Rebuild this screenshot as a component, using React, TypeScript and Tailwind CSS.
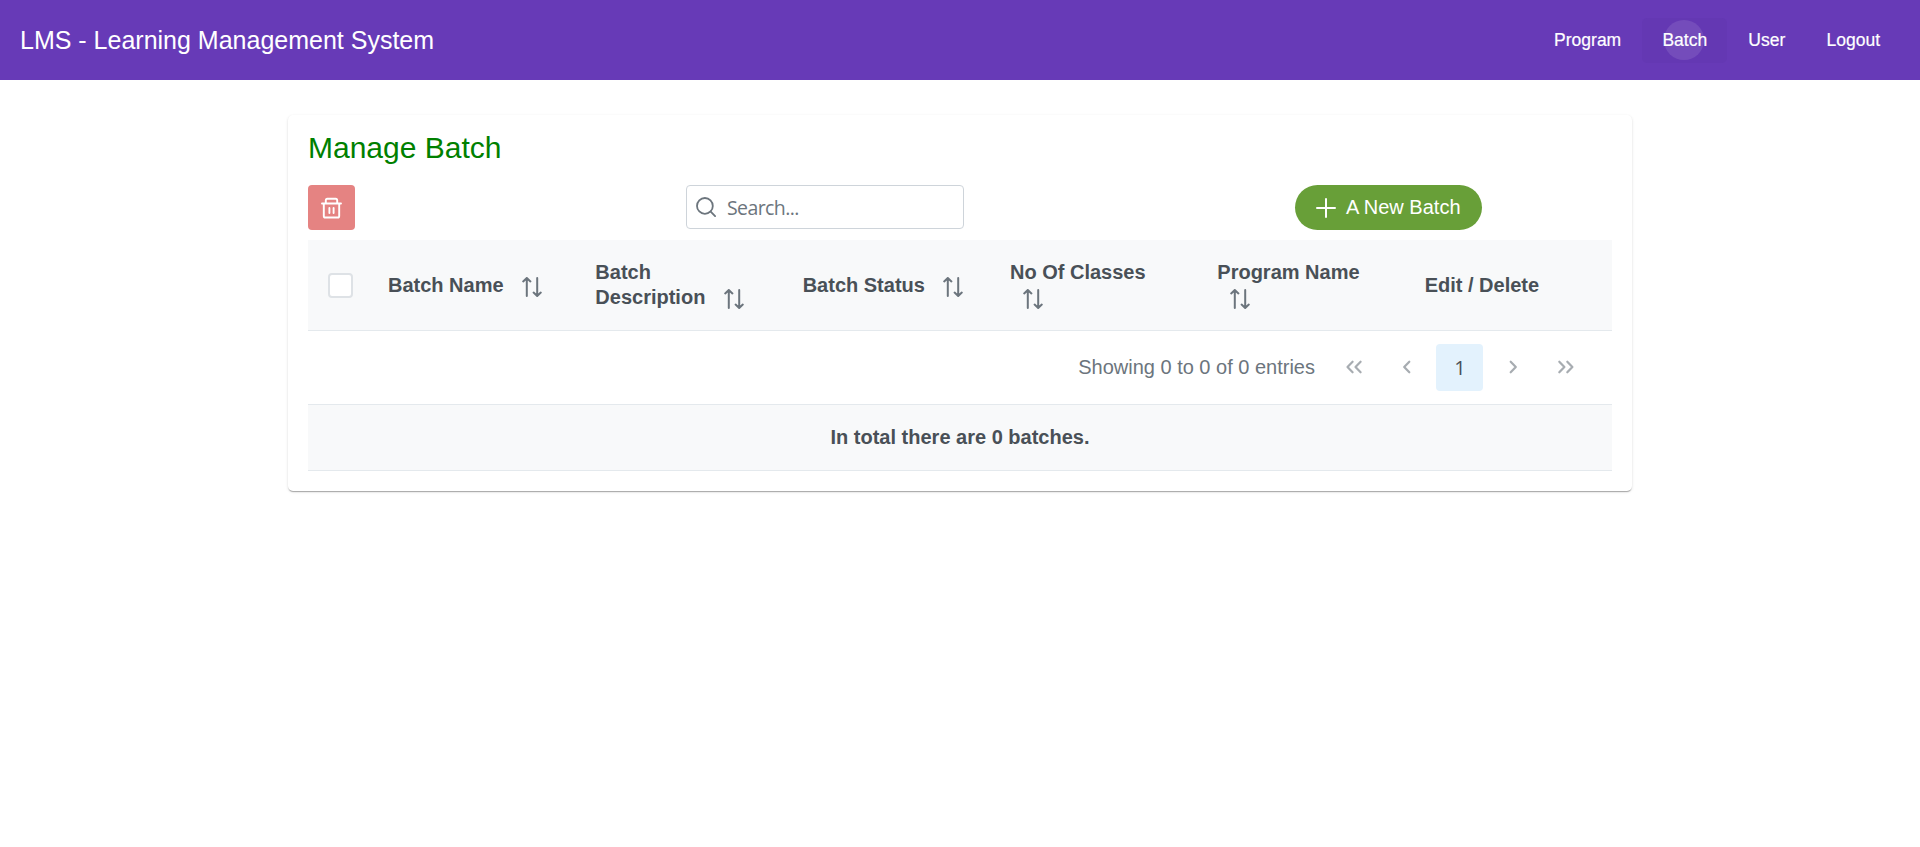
import React from "react";

const nav = ["Program", "Batch", "User", "Logout"];

const columns = [
  { label: "Batch Name", sortable: true, lines: 1 },
  { label: "Batch Description", sortable: true, lines: 2 },
  { label: "Batch Status", sortable: true, lines: 1 },
  { label: "No Of Classes", sortable: true, lines: 2 },
  { label: "Program Name", sortable: true, lines: 2 },
  { label: "Edit / Delete", sortable: false, lines: 1 },
];

function SortIcon() {
  return (
    <svg className="ml-[13px] inline-block h-5 w-5 align-[-5px] text-[#6c757d]" viewBox="0 0 20 20" fill="none" stroke="currentColor" strokeWidth="2" strokeLinecap="round" strokeLinejoin="round">
      <path d="M4.8 19V1.4M1.2 4.4l3.6-3.4 3.6 3.4M15.2 1V18.6M11.6 15.6l3.6 3.4 3.6-3.4" />
    </svg>
  );
}

function TrashIcon() {
  return (
    <svg className="h-[22px] w-[21px]" viewBox="0 0 21 22" fill="none" stroke="currentColor" strokeWidth="1.9" strokeLinecap="round" strokeLinejoin="round">
      <path d="M1 6.5h19M2.8 6.5v12.4c0 .9.6 1.6 1.5 1.6h12.4c.9 0 1.5-.7 1.5-1.6V6.5M4.8 6.5V3.4c0-.9.6-1.6 1.5-1.6h8.4c.9 0 1.5.7 1.5 1.6v3.1M8.4 11v5M12.6 11v5" />
    </svg>
  );
}

function Chevron({ paths, label }: { paths: string; label: string }) {
  return (
    <button aria-label={label} className="mx-[3px] flex h-[47px] w-[47px] items-center justify-center text-[#6c757d]/60">
      <svg className="h-[18px] w-[18px]" viewBox="0 0 18 18" fill="none" stroke="currentColor" strokeWidth="2.2" strokeLinecap="round" strokeLinejoin="round">
        <path d={paths} />
      </svg>
    </button>
  );
}

export default function App() {
  return (
    <div className="min-h-[847px] bg-white font-['Liberation_Sans',Arial,sans-serif]">
      <header className="flex h-20 items-center justify-between bg-[#673ab7] px-5 text-white">
        <h1 className="text-[25px] leading-8">LMS - Learning Management System</h1>
        <nav className="flex gap-[1.2px]">
          {nav.map((item) => (
            <button key={item} className={"relative h-[45px] rounded-[5px] px-5 text-[17.5px] [-webkit-text-stroke:0.2px_white] " + (item === "Batch" ? "bg-[#6438b3]" : "")}>
              {item === "Batch" && <span className="absolute top-[2px] left-[21.5px] h-10 w-10 rounded-full bg-white/10" />}
              <span className="relative">{item}</span>
            </button>
          ))}
        </nav>
      </header>

      <main className="mx-auto mt-[35px] h-[376px] w-[1344px] rounded-[5px] bg-white px-5 shadow-[0_2px_1px_-1px_rgba(0,0,0,0.2),0_1px_1px_0_rgba(0,0,0,0.1),0_1px_3px_0_rgba(0,0,0,0.12)]">
        <h2 className="pt-[13px] text-[30px] leading-10 text-[#008000]">Manage Batch</h2>

        <div className="mt-[17px] flex h-[45px] items-start">
          <button aria-label="Delete" className="flex h-[45px] w-[47px] items-center justify-center rounded-[4px] bg-[#e58382] text-white">
            <TrashIcon />
          </button>
          <label className="ml-[331px] flex h-11 w-[278px] items-center rounded-[4px] border border-[#ced4da] pl-[9px]">
            <svg className="h-5 w-5 shrink-0 text-[#6c757d]" viewBox="0 0 20 20" fill="none" stroke="currentColor" strokeWidth="1.8" strokeLinecap="round">
              <circle cx="8.9" cy="8.9" r="7.9" />
              <path d="M14.7 14.7l4.4 4.4" />
            </svg>
            <input placeholder="Search..." className="mt-[2px] ml-[11px] w-[220px] bg-transparent font-['Open_Sans','Noto_Sans',sans-serif] text-[19.5px] tracking-[-0.6px] text-[#6c757d] outline-none placeholder:text-[#6c757d]" />
          </label>
          <button className="ml-[331px] flex h-[45px] w-[187px] items-center rounded-full bg-[#689f38] pl-[21px] text-[20px] text-white">
            <svg className="mt-px h-5 w-5" viewBox="0 0 20 20" fill="none" stroke="currentColor" strokeWidth="2" strokeLinecap="round">
              <path d="M10 1v18M1 10h18" />
            </svg>
            <span className="mb-[2px] ml-[10px] whitespace-nowrap">A New Batch</span>
          </button>
        </div>

        <table className="mt-[10px] w-full table-fixed border-collapse">
          <thead>
            <tr className="h-[90px] border-b border-[#e4e9ed] bg-[#f8f9fa] text-left text-[20px] leading-[25px] text-[#495057]">
              <th className="w-[60px] pt-[2px] pl-5">
                <span className="block h-[25px] w-[25px] rounded-[4px] border-2 border-[#dee2e6] bg-white" />
              </th>
              {columns.map((c) => (
                <th key={c.label} className={"px-5 pb-0 font-bold " + (c.lines === 1 ? "pt-[2px]" : "pt-0")}>
                  {c.label} {c.sortable && <SortIcon />}
                </th>
              ))}
            </tr>
          </thead>
        </table>

        <div className="flex h-[73px] items-center justify-end pr-5 text-[20px] text-[#6c757d]">
          <span className="mr-[12px]">Showing 0 to 0 of 0 entries</span>
          <Chevron label="First page" paths="M7.6 3.7L2.5 9L7.6 14.3M15.6 3.7L10.5 9L15.6 14.3" />
          <Chevron label="Previous page" paths="M11.3 3.7L6.2 9L11.3 14.3" />
          <button className="mx-[3px] h-[47px] w-[47px] rounded-[4px] bg-[#e3f2fd] pt-[2px] pl-px font-['Open_Sans','Noto_Sans',sans-serif] text-[#495057]">1</button>
          <Chevron label="Next page" paths="M6.7 3.7L11.8 9L6.7 14.3" />
          <Chevron label="Last page" paths="M2.3 3.7L7.4 9L2.3 14.3M10.3 3.7L15.4 9L10.3 14.3" />
        </div>

        <footer className="flex h-[67px] items-center justify-center border-y border-[#e4e9ed] bg-[#f8f9fa] text-[20px] font-bold text-[#495057]">
          In total there are 0 batches.
        </footer>
      </main>
    </div>
  );
}
